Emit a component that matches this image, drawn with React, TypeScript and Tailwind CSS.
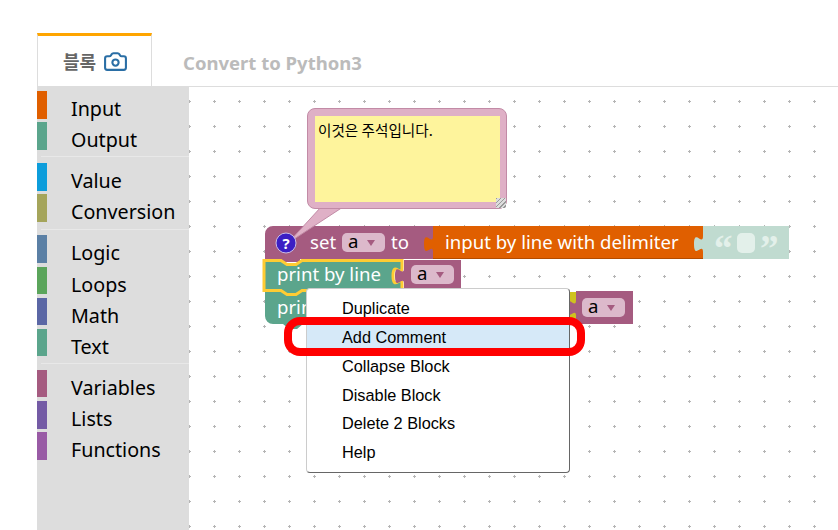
import { Camera } from 'lucide-react';

const groups = [
  [
    { name: 'Input', color: 'bg-[#e05f00]' },
    { name: 'Output', color: 'bg-[#5ba58c]' },
  ],
  [
    { name: 'Value', color: 'bg-[#0d9ddb]' },
    { name: 'Conversion', color: 'bg-[#a5a55b]' },
  ],
  [
    { name: 'Logic', color: 'bg-[#5b80a5]' },
    { name: 'Loops', color: 'bg-[#5ba55b]' },
    { name: 'Math', color: 'bg-[#5b67a5]' },
    { name: 'Text', color: 'bg-[#5ba58c]' },
  ],
  [
    { name: 'Variables', color: 'bg-[#a55b80]' },
    { name: 'Lists', color: 'bg-[#745ba5]' },
    { name: 'Functions', color: 'bg-[#995ba5]' },
  ],
];

const menuItems = ['Duplicate', 'Add Comment', 'Collapse Block', 'Disable Block', 'Delete 2 Blocks', 'Help'];

// puzzle tab on the left edge of a block, drawn bottom to top
const tabUp = 'c0,-10 -9,8 -9,-8 s9,2.5 9,-8';

function VarField({ x, y, w = 43, h = 19 }: { x: number; y: number; w?: number; h?: number }) {
  return (
    <g>
      <rect x={x} y={y} width={w} height={h} rx={5} fill="#dcb9cb" />
      <text x={x + 6} y={y + 15} fontSize={18.6} fill="#000">a</text>
      <path d={`M${x + 25},${y + 7} h8 l-4,6 z`} fill="#a55b80" />
    </g>
  );
}

function Blocks() {
  return (
    <svg
      viewBox="189 87 649 443"
      className="absolute left-0 top-0 h-[443px] w-[649px] font-['Noto_Sans',sans-serif]"
    >
      {/* second print block, mostly under the menu */}
      <path d="M265,292 H570 V324 H303 l-6,5 h-8 l-6,-5 H273 A8,8 0 0 1 265,316 Z" fill="#5ba58c" />
      <text x={277} y={314} fontSize={18.6} fill="#fff">prin</text>

      {/* set a to */}
      <path d="M265,262 V234 A8,8 0 0 1 273,226 H433 V259 H300 V262 Z" fill="#a55b80" />
      <text x={310} y={249} fontSize={18.6} fill="#fff">set</text>
      <VarField x={342} y={233} />
      <text x={391} y={249} fontSize={18.6} fill="#fff">to</text>

      {/* input by line with delimiter */}
      <path d={`M433,226 H703 V259 H433 V252 ${tabUp} Z`} fill="#e05f00" />
      <path d="M433,258.5 H703" stroke="#b34c00" strokeWidth={1} />
      <text x={445} y={249} fontSize={18.6} fill="#fff">input by line with delimiter</text>

      {/* empty text block */}
      <path d={`M703,226 H789 V259 H703 V252 ${tabUp} Z`} fill="#c0dbd0" />
      <text x={714} y={261} fontSize={37} fontWeight={700} fill="#e3f0ea" className="font-['Liberation_Serif',serif]">“</text>
      <rect x={737} y={233} width={18} height={20} rx={5} fill="#e3f0ea" />
      <text x={760} y={261} fontSize={37} fontWeight={700} fill="#e3f0ea" className="font-['Liberation_Serif',serif]">”</text>

      {/* selected print block */}
      <path
        d={`M264,260.5 H281 l6,4 h9 l6,-4 H402 V268 c0,10 -9,-8 -9,8 s9,-2.5 9,8 V290.5 H302 l-6,4 h-9 l-6,-4 H264 Z`}
        fill="#5ba58c"
        stroke="#ffcc33"
        strokeWidth={3}
      />
      <text x={277} y={281} fontSize={18.6} fill="#fff">print by line</text>

      {/* variable a next to it */}
      <path d={`M404,260 H461 V292 H404 V284 ${tabUp} Z`} fill="#a55b80" />
      <VarField x={411} y={265} />

      {/* yellow block end and variable on the right */}
      <rect x={569} y={292} width={8} height={32} fill="#cfc21f" />
      <path d={`M576,291 H633 V324 H576 V316 ${tabUp} Z`} fill="#a55b80" />
      <VarField x={582} y={298} />

      {/* comment tail and icon */}
      <path d="M321,207 L343,207 L288,243 Z" fill="#dfb0c6" stroke="#c28ba6" strokeWidth={1} />
      <circle cx={286} cy={243} r={10} fill="#3c1fc4" stroke="#c7bce8" strokeWidth={1} />
      <text x={286} y={249} fontSize={15} fontWeight={700} fill="#fff" textAnchor="middle">?</text>
    </svg>
  );
}

export default function App() {
  return (
    <div className="flex h-[530px] w-[838px] flex-col overflow-hidden bg-white pl-[37px] pt-[33px]">
      {/* Tabs */}
      <div className="flex h-[53px] shrink-0">
        <div className="flex w-[115px] items-center justify-center gap-[7px] border-x border-t-[3px] border-[#ddd] border-t-[#ffa500] pl-[2px] pt-[1px]">
          <span className="font-['Noto_Sans_CJK_KR',sans-serif] text-[18px] font-bold text-[#666]">블록</span>
          <Camera className="h-[25px] w-[25px] text-[#2a6ea5]" strokeWidth={2} />
        </div>
        <div className="flex flex-1 items-center pl-[31px] pt-[6px] font-['Noto_Sans',sans-serif] text-[18.5px] font-bold text-[#bbb]">
          Convert to Python3
        </div>
      </div>

      <div className="flex min-h-0 flex-1">
        {/* Toolbox */}
        <div className="w-[152px] shrink-0 bg-[#ddd] pt-[5px] font-['Noto_Sans',sans-serif] text-[19.7px] text-black">
          {groups.map((group, i) => (
            <div key={i} className={i < groups.length - 1 ? 'mb-[5.8px] ml-[4px] border-b border-[#e8e8e8] pb-[3px]' : 'ml-[4px]'}>
              {group.map((item) => (
                <div key={item.name} className="-ml-[4px] flex h-[31.2px] items-start">
                  <div className={`h-[27.5px] w-[10px] shrink-0 ${item.color}`} />
                  <span className="ml-[24px] leading-[36px]">{item.name}</span>
                </div>
              ))}
            </div>
          ))}
        </div>

        {/* Workspace */}
        <div className="relative flex-1 border-t border-[#ddd] bg-white bg-[radial-gradient(circle,#b5b5b5_1px,transparent_1.2px)] bg-[length:25px_25px] bg-[position:-12px_2px]">
          <Blocks />

          {/* Comment bubble */}
          <div className="absolute left-[118px] top-[21px] h-[101px] w-[200px] rounded-lg border border-[#c28ba6] bg-[#dfb0c6] pb-[6px] pl-[7px] pr-[6px] pt-[7px]">
            <div className="relative h-full bg-[#fef49c] pl-[3px] pt-[4px] font-['Noto_Sans_CJK_KR',sans-serif] text-[14.6px] leading-[20px] text-black">
              이것은 주석입니다.
              <div className="absolute bottom-[-6px] right-[-6px] h-[10px] w-[10px] bg-[repeating-linear-gradient(135deg,#999_0,#999_1px,#ddd_1px,#ddd_3px)]" />
            </div>
          </div>

          {/* Context menu */}
          <div className="absolute left-[117px] top-[201px] h-[185px] w-[264px] rounded border border-[#ccc] border-b-[#666] border-r-[#666] bg-white py-[5px] font-['Liberation_Sans',sans-serif] text-[16.3px] text-black">
            {menuItems.map((label) => (
              <div
                key={label}
                className={`flex h-[28.8px] items-center pl-[35px] ${label === 'Add Comment' ? 'bg-[#d6e9f8]' : ''}`}
              >
                {label}
              </div>
            ))}
          </div>

          {/* Red annotation */}
          <div className="absolute left-[95px] top-[230px] h-[39px] w-[301px] rounded-[16px] border-[8px] border-[#ff0000]" />
        </div>
      </div>
    </div>
  );
}
